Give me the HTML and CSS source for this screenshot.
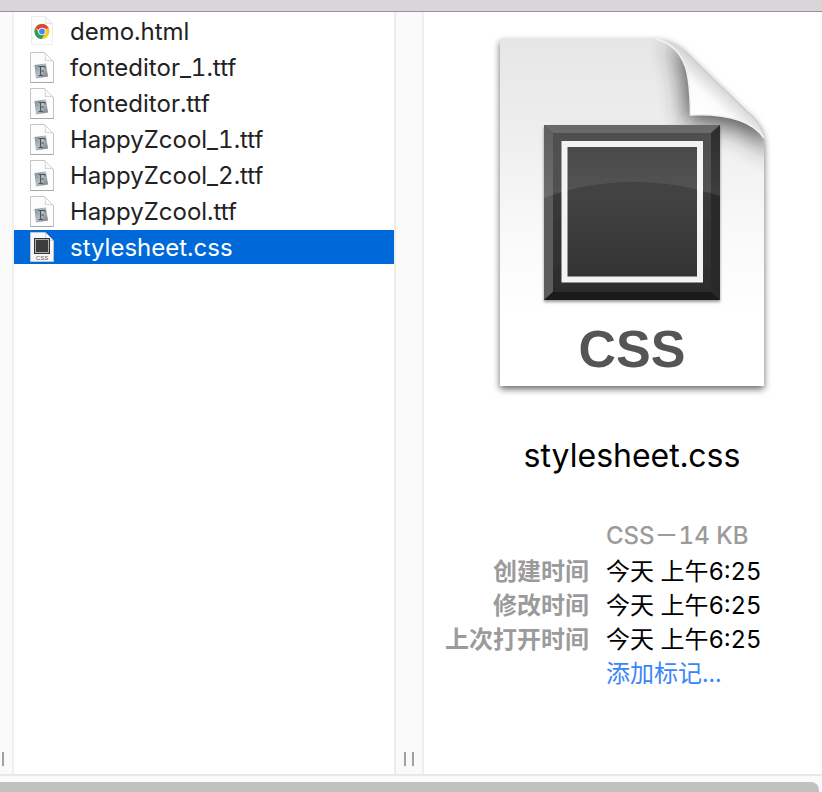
FILE: index.html
```html
<!DOCTYPE html>
<html lang="zh-CN">
<head>
<meta charset="utf-8">
<title>stylesheet.css</title>
<link rel="stylesheet" href="styles.css">
</head>
<body>
<svg class="defs" aria-hidden="true">
  <defs>
    <linearGradient id="tile" x1="0" y1="0" x2="1" y2="1">
      <stop offset="0" stop-color="#7f8b93"/><stop offset=".5" stop-color="#b4bec3"/><stop offset="1" stop-color="#68737a"/>
    </linearGradient>
    <symbol id="font-file" viewBox="0 0 24 32">
      <path d="M.5 .5H14.500L23.500 9.500V30.500H.5Z" fill="#fdfdfd" stroke="#c4c4c4"/>
      <path d="M.5 30.500H23.500" stroke="#a9a9a9"/>
      <path d="M14.500 .5C16 3 15.500 6 15 8.500C18 8 21 8 23.500 9.500Z" fill="#fff" stroke="#cfcfcf"/>
      <path d="M4.500 13L16 11.500L18 24.500L6 26.500Z" fill="url(#tile)"/>
      <path d="M8.500 14.500H15V16.500M10.500 14.500V23.500M8.500 23.500H13M10.500 19H14" fill="none" stroke="#4c5860" stroke-width="1.100"/>
    </symbol>
    <symbol id="html-file" viewBox="0 0 24 32">
      <path d="M1.500 .5H15L22.500 8V28.500H1.500Z" fill="#fefefe" stroke="#ececec"/>
      <path d="M15 .5C16 3 16 5 15.500 7.500C18 7 20 7 22.500 8Z" fill="#fff" stroke="#e2e2e2"/>
      <circle cx="12" cy="15.500" r="7.500" fill="#f7c928"/>
      <path d="M12 15.500L5.300 12A7.500 7.500 0 0 1 18.900 12.500H12Z" fill="#dc4437"/>
      <path d="M5.300 12A7.500 7.500 0 0 0 11.500 23L15 17.500L12 15.500L9 17Z" fill="#27a05a"/>
      <circle cx="12" cy="15.500" r="3.700" fill="#fff"/>
      <circle cx="12" cy="15.500" r="2.900" fill="#4a87e8"/>
    </symbol>
    <symbol id="css-file" viewBox="0 0 24 32">
      <path d="M.5 .5H15.500L23.500 8.500V29.500H.5Z" fill="#f8f8f8" stroke="#bfc5cc"/>
      <path d="M15.500 .5L16 7.500L23.500 8.500Z" fill="#fff" stroke="#aaa" stroke-width=".6"/>
      <rect x="4" y="6" width="16" height="16" fill="#333"/>
      <rect x="5.500" y="7.500" width="13" height="13" fill="#3d3d3d" stroke="#ccc" stroke-width=".8"/>
      <text x="12" y="27.500" text-anchor="middle" class="tiny-label">CSS</text>
    </symbol>
  </defs>
</svg>
<div class="window">
  <header class="toolbar-edge"></header>
  <main class="columns">
    <div class="gutter gutter-left"><span class="grip"></span></div>
    <ul class="files">
      <li><a class="file" href="#"><svg class="file-icon" aria-hidden="true"><use href="#html-file"/></svg>demo.html</a></li>
      <li><a class="file" href="#"><svg class="file-icon" aria-hidden="true"><use href="#font-file"/></svg>fonteditor_1.ttf</a></li>
      <li><a class="file" href="#"><svg class="file-icon" aria-hidden="true"><use href="#font-file"/></svg>fonteditor.ttf</a></li>
      <li><a class="file" href="#"><svg class="file-icon" aria-hidden="true"><use href="#font-file"/></svg>HappyZcool_1.ttf</a></li>
      <li><a class="file" href="#"><svg class="file-icon" aria-hidden="true"><use href="#font-file"/></svg>HappyZcool_2.ttf</a></li>
      <li><a class="file" href="#"><svg class="file-icon" aria-hidden="true"><use href="#font-file"/></svg>HappyZcool.ttf</a></li>
      <li><a class="file selected" href="#" aria-current="true"><svg class="file-icon" aria-hidden="true"><use href="#css-file"/></svg>stylesheet.css</a></li>
    </ul>
    <div class="gutter gutter-mid"><span class="grip"></span><span class="grip"></span></div>
    <section class="preview">
      <svg class="artwork" viewBox="472 20 320 390" aria-hidden="true">
        <defs>
          <linearGradient id="paper" x1="0" y1="0" x2="0" y2="1">
            <stop offset="0" stop-color="#e6e6e6"/><stop offset=".3" stop-color="#efefef"/><stop offset=".55" stop-color="#f9f9f9"/><stop offset=".8" stop-color="#fff"/>
          </linearGradient>
          <linearGradient id="curl" gradientUnits="userSpaceOnUse" x1="696" y1="112" x2="725" y2="80">
            <stop offset="0" stop-color="#fff"/><stop offset=".45" stop-color="#fbfbfb"/><stop offset=".75" stop-color="#dedede"/><stop offset="1" stop-color="#c8c8c8"/>
          </linearGradient>
          <linearGradient id="rim" x1="0" y1="0" x2="0" y2="1">
            <stop offset="0" stop-color="#4b4b4b"/><stop offset=".38" stop-color="#3f3f3f"/><stop offset=".39" stop-color="#3a3a3a"/><stop offset="1" stop-color="#2b2b2b"/>
          </linearGradient>
          <linearGradient id="pane" x1="0" y1="0" x2="0" y2="1">
            <stop offset="0" stop-color="#414141"/><stop offset=".4" stop-color="#424242"/><stop offset="1" stop-color="#333"/>
          </linearGradient>
          <linearGradient id="gloss" x1="0" y1="0" x2="0" y2="1">
            <stop offset="0" stop-color="#fff" stop-opacity=".02"/><stop offset="1" stop-color="#fff" stop-opacity=".1"/>
          </linearGradient>
          <filter id="drop" x="-10%" y="-10%" width="120%" height="120%"><feDropShadow dx="0" dy="3" stdDeviation="3.500" flood-opacity=".6"/></filter>
          <filter id="soft" x="-50%" y="-50%" width="200%" height="200%"><feGaussianBlur stdDeviation="12"/></filter>
          <filter id="frame-shadow"><feDropShadow dx="0" dy="2" stdDeviation="1.500" flood-opacity=".4"/></filter>
          <clipPath id="sheet"><path d="M500 39H656C670 39 679 45 686 52L745 110C758 120 764 130 764 144V386H500Z"/></clipPath>
        </defs>
        <path filter="url(#drop)" fill="url(#paper)" d="M500 39H656C670 39 679 45 686 52L745 110C758 120 764 130 764 144V386H500Z"/>
        <g clip-path="url(#sheet)">
          <path d="M668 42C682 57 687 83 686 123C725 122 750 126 772 155V70Z" fill="#333" opacity=".85" filter="url(#soft)"/>
        </g>
        <g filter="url(#frame-shadow)"><rect x="544" y="125" width="176" height="175" fill="url(#rim)"/></g>
        <path d="M544 125H720L711 133H553Z" fill="#666"/>
        <path d="M544 125L553 133V292L544 300Z" fill="#5c5c5c"/>
        <path d="M720 125L711 133V292L720 300Z" fill="#292929"/>
        <path d="M544 300L553 292H711L720 300Z" fill="#1b1b1b"/>
        <rect x="564.500" y="144" width="135.500" height="135.500" fill="url(#pane)" stroke="#f3f3f3" stroke-width="6"/>
        <path d="M544 125H720V196C664 177 598 177 544 198Z" fill="url(#gloss)"/>
        <path d="M656 39C671 39 679 45 686 52L745 110C756 119 761 125 764 138C749 116 716 114 690.500 115C690 79 689 48 656 39Z" fill="url(#curl)"/>
        <path d="M764 138C749 116 716 114 690.500 115C690 79 689 48 656 39" fill="none" stroke="#f3f3f3" stroke-width="1.500"/>
        <text class="art-label" x="632" y="367" text-anchor="middle">CSS</text>
      </svg>
      <h1 class="title">stylesheet.css</h1>
      <dl class="details">
        <dd class="kind">CSS－14 KB</dd>
        <dt>创建时间</dt><dd>今天 上午6:25</dd>
        <dt>修改时间</dt><dd>今天 上午6:25</dd>
        <dt>上次打开时间</dt><dd>今天 上午6:25</dd>
        <dd class="tags"><a href="#">添加标记...</a></dd>
      </dl>
    </section>
  </main>
  <footer class="scroll-track"><div class="scroll-thumb"></div></footer>
</div>
</body>
</html>
```
FILE: styles.css
```css
* { box-sizing: border-box; }
body {
  margin: 0;
  background: #fff;
  color: #222;
  font: 24px/34px Inter, "Noto Sans CJK SC", sans-serif;
  font-variant-numeric: tabular-nums;
}
.defs { position: absolute; width: 0; height: 0; }
.window { display: flex; flex-direction: column; height: 100vh; overflow: hidden; }
.toolbar-edge { flex: none; height: 12px; background: #d8d6d8; border-bottom: 1px solid #959395; }
.columns { flex: 1; display: flex; min-height: 0; }
.gutter {
  flex: none;
  display: flex;
  align-items: flex-end;
  padding-bottom: 8px;
  background: #fafafa;
  border-right: 2px solid #efefef;
}
.gutter-left { width: 14px; padding-left: 2px; }
.gutter-mid { width: 30px; gap: 6px; padding-left: 8px; border-left: 2px solid #ececec; }
.grip { width: 2px; height: 14px; background: #a0a0a0; }
.files {
  flex: 0 1 380px;
  display: flex;
  flex-direction: column;
  gap: 2px;
  min-width: 0;
  margin: 0;
  padding: 2px 0;
  list-style: none;
}
.file {
  display: flex;
  align-items: center;
  gap: 16px;
  height: 34px;
  padding: 2px 0 0 16px;
  color: inherit;
  text-decoration: none;
  white-space: nowrap;
}
.file-icon { flex: none; width: 24px; height: 32px; }
.selected { background: #0069d9; color: #fff; }
.tiny-label { font: 400 6px "Liberation Sans", sans-serif; fill: #555; }
.preview {
  flex: 1;
  min-width: 0;
  padding: 8px 0 0 18px;
  color: #000;
}
.artwork { display: block; width: 320px; height: 390px; margin: 0 auto; }
.art-label { font: 700 52px "Liberation Sans", sans-serif; fill: #555; }
.title { margin: 26px 0 43px; font-size: 32px; line-height: 40px; font-weight: 400; text-align: center; }
.details {
  display: grid;
  grid-template-columns: 147px 1fr;
  column-gap: 17px;
  margin: 0;
}
.details dt { color: #9b9b9b; font-weight: 600; text-align: right; white-space: nowrap; }
.details dd { margin: 0; white-space: nowrap; }
.details .kind { grid-column: 2; margin-bottom: 2px; color: #9b9b9b; font-weight: 500; }
.details .tags { grid-column: 2; }
.tags a { color: #3b86f7; text-decoration: none; }
.scroll-track { flex: none; height: 18px; padding: 6px 3px 0 0; background: #fafafa; border-top: 2px solid #e8e8e8; }
.scroll-thumb { height: 20px; background: #c1c1c1; border-radius: 0 8px 8px 0; }
```
